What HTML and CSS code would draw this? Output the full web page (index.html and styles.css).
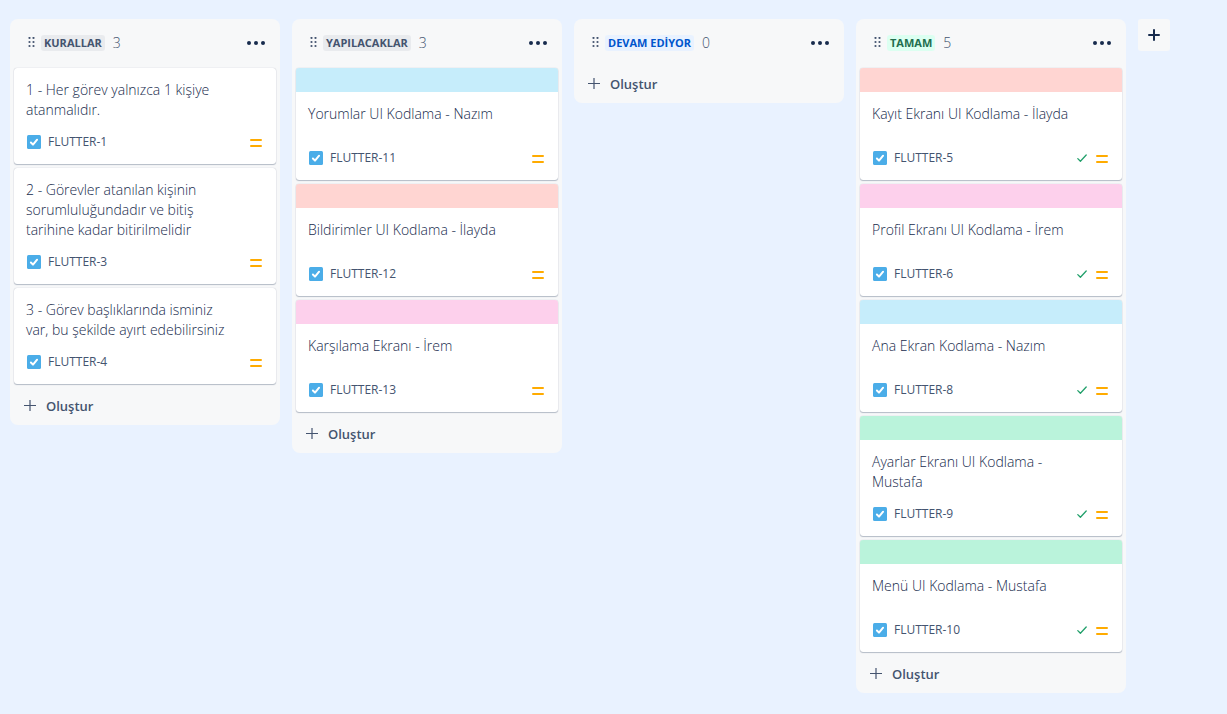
FILE: index.html
```html
<!DOCTYPE html>
<html lang="tr">
<head>
<meta charset="utf-8">
<meta name="viewport" content="width=device-width, initial-scale=1">
<title>Flutter Panosu</title>
<link rel="stylesheet" href="styles.css">
</head>
<body>
<svg class="sprite" aria-hidden="true">
  <symbol id="grip" viewBox="0 0 7 11"><g fill="currentColor"><circle cx="1.5" cy="1" r="1.1"/><circle cx="5.5" cy="1" r="1.1"/><circle cx="1.5" cy="5" r="1.1"/><circle cx="5.5" cy="5" r="1.1"/><circle cx="1.5" cy="9" r="1.1"/><circle cx="5.5" cy="9" r="1.1"/></g></symbol>
  <symbol id="more" viewBox="0 0 18 4"><g fill="currentColor"><circle cx="2" cy="2" r="2"/><circle cx="9" cy="2" r="2"/><circle cx="16" cy="2" r="2"/></g></symbol>
  <symbol id="task" viewBox="0 0 14 14"><rect width="14" height="14" rx="1.5" fill="#4bade8"/><path d="M3.9 7.5 6 9.6l4.1-4.9" fill="none" stroke="#fff" stroke-width="2" stroke-linecap="round" stroke-linejoin="round"/></symbol>
  <symbol id="priority" viewBox="0 0 12 10"><path d="M1 3h10M1 9h10" stroke="#ffab00" stroke-width="2" stroke-linecap="round"/></symbol>
  <symbol id="done" viewBox="0 0 11 10"><path d="M.8 5.6 3.4 8.2 9.2 2" fill="none" stroke="#22a06b" stroke-width="1.3" stroke-linecap="round" stroke-linejoin="round"/></symbol>
  <symbol id="plus" viewBox="0 0 12 12"><path d="M6 0v11M0 5.5h12" stroke="currentColor" stroke-width="1.2"/></symbol>
  <symbol id="plus-bold" viewBox="0 0 12 12"><path d="M6 1v10M1 6h10" stroke="currentColor" stroke-width="2" stroke-linecap="round"/></symbol>
</svg>
<main class="board">
  <section class="column">
    <header class="column-header">
      <svg class="grip"><use href="#grip"/></svg>
      <h2 class="status">KURALLAR</h2><span class="count">3</span>
      <button class="more" type="button" aria-label="Diğer"><svg><use href="#more"/></svg></button>
    </header>
    <div class="cards">
      <article class="card">
        <p class="title">1 - Her görev yalnızca 1 kişiye atanmalıdır.</p>
        <footer class="meta"><svg class="task"><use href="#task"/></svg><span class="key">FLUTTER-1</span><svg class="priority"><use href="#priority"/></svg></footer>
      </article>
      <article class="card">
        <p class="title">2 - Görevler atanılan kişinin sorumluluğundadır ve bitiş tarihine kadar bitirilmelidir</p>
        <footer class="meta"><svg class="task"><use href="#task"/></svg><span class="key">FLUTTER-3</span><svg class="priority"><use href="#priority"/></svg></footer>
      </article>
      <article class="card">
        <p class="title">3 - Görev başlıklarında isminiz var, bu şekilde ayırt edebilirsiniz</p>
        <footer class="meta"><svg class="task"><use href="#task"/></svg><span class="key">FLUTTER-4</span><svg class="priority"><use href="#priority"/></svg></footer>
      </article>
    </div>
    <button class="create" type="button"><svg><use href="#plus"/></svg>Oluştur</button>
  </section>

  <section class="column">
    <header class="column-header">
      <svg class="grip"><use href="#grip"/></svg>
      <h2 class="status">YAPILACAKLAR</h2><span class="count">3</span>
      <button class="more" type="button" aria-label="Diğer"><svg><use href="#more"/></svg></button>
    </header>
    <div class="cards">
      <article class="card cover blue">
        <p class="title">Yorumlar UI Kodlama - Nazım</p>
        <footer class="meta"><svg class="task"><use href="#task"/></svg><span class="key">FLUTTER-11</span><svg class="priority"><use href="#priority"/></svg></footer>
      </article>
      <article class="card cover red">
        <p class="title">Bildirimler UI Kodlama - İlayda</p>
        <footer class="meta"><svg class="task"><use href="#task"/></svg><span class="key">FLUTTER-12</span><svg class="priority"><use href="#priority"/></svg></footer>
      </article>
      <article class="card cover pink">
        <p class="title">Karşılama Ekranı - İrem</p>
        <footer class="meta"><svg class="task"><use href="#task"/></svg><span class="key">FLUTTER-13</span><svg class="priority"><use href="#priority"/></svg></footer>
      </article>
    </div>
    <button class="create" type="button"><svg><use href="#plus"/></svg>Oluştur</button>
  </section>

  <section class="column">
    <header class="column-header">
      <svg class="grip"><use href="#grip"/></svg>
      <h2 class="status progress">DEVAM EDİYOR</h2><span class="count">0</span>
      <button class="more" type="button" aria-label="Diğer"><svg><use href="#more"/></svg></button>
    </header>
    <button class="create" type="button"><svg><use href="#plus"/></svg>Oluştur</button>
  </section>

  <section class="column">
    <header class="column-header">
      <svg class="grip"><use href="#grip"/></svg>
      <h2 class="status complete">TAMAM</h2><span class="count">5</span>
      <button class="more" type="button" aria-label="Diğer"><svg><use href="#more"/></svg></button>
    </header>
    <div class="cards">
      <article class="card cover red">
        <p class="title">Kayıt Ekranı UI Kodlama - İlayda</p>
        <footer class="meta"><svg class="task"><use href="#task"/></svg><span class="key">FLUTTER-5</span><svg class="done"><use href="#done"/></svg><svg class="priority"><use href="#priority"/></svg></footer>
      </article>
      <article class="card cover pink">
        <p class="title">Profil Ekranı UI Kodlama - İrem</p>
        <footer class="meta"><svg class="task"><use href="#task"/></svg><span class="key">FLUTTER-6</span><svg class="done"><use href="#done"/></svg><svg class="priority"><use href="#priority"/></svg></footer>
      </article>
      <article class="card cover blue">
        <p class="title">Ana Ekran Kodlama - Nazım</p>
        <footer class="meta"><svg class="task"><use href="#task"/></svg><span class="key">FLUTTER-8</span><svg class="done"><use href="#done"/></svg><svg class="priority"><use href="#priority"/></svg></footer>
      </article>
      <article class="card cover green">
        <p class="title">Ayarlar Ekranı UI Kodlama - Mustafa</p>
        <footer class="meta"><svg class="task"><use href="#task"/></svg><span class="key">FLUTTER-9</span><svg class="done"><use href="#done"/></svg><svg class="priority"><use href="#priority"/></svg></footer>
      </article>
      <article class="card cover green">
        <p class="title">Menü UI Kodlama - Mustafa</p>
        <footer class="meta"><svg class="task"><use href="#task"/></svg><span class="key">FLUTTER-10</span><svg class="done"><use href="#done"/></svg><svg class="priority"><use href="#priority"/></svg></footer>
      </article>
    </div>
    <button class="create" type="button"><svg><use href="#plus"/></svg>Oluştur</button>
  </section>

  <button class="add-column" type="button" aria-label="Sütun oluştur"><svg><use href="#plus-bold"/></svg></button>
</main>
</body>
</html>
```
FILE: styles.css
```css
* { box-sizing: border-box; }

body {
  margin: 0;
  background: #e9f2ff;
  color: #172b4d;
  font: 14px/20px "Open Sans", "Noto Sans", sans-serif;
}

.sprite { display: none; }

button {
  border: 0;
  background: none;
  font: inherit;
  cursor: pointer;
}

.board {
  display: flex;
  align-items: flex-start;
  gap: 12px;
  padding: 19px 10px;
}

.column {
  flex: none;
  width: 270px;
  padding: 0 4px 1px;
  border-radius: 8px;
  background: #f7f8f9;
}

.column-header {
  display: flex;
  align-items: center;
  height: 47px;
  padding: 0 4px 0 14px;
}

.grip {
  width: 7px;
  height: 11px;
  margin-right: 6px;
  color: #44546f;
}

.status {
  margin: 0;
  padding: 0 3px;
  border-radius: 3px;
  background: #e9ebee;
  color: #44546f;
  font-size: 11px;
  font-weight: 700;
  line-height: 16px;
}

.status.progress { background: #e9f2ff; color: #0055cc; }
.status.complete { background: #dcfff1; color: #216e4e; }

.count {
  margin-left: 8px;
  color: #44546f;
  font-weight: 300;
}

.more {
  display: grid;
  place-items: center;
  width: 32px;
  height: 32px;
  margin-left: auto;
  padding: 0;
  color: #172b4d;
}

.more svg { width: 18px; height: 4px; }

.cards {
  display: flex;
  flex-direction: column;
  gap: 4px;
  padding: 2px 0 4px;
}

.card {
  padding: 12px;
  overflow: hidden;
  border-radius: 3px;
  background: #fff;
  box-shadow: 0 1px 1px #091e4240, 0 0 1px #091e424f;
}

.cover::before {
  content: "";
  display: block;
  height: 24px;
  margin: -12px -12px 12px;
}

.blue::before { background: #c6edfb; }
.red::before { background: #ffd5d2; }
.pink::before { background: #fdd0ec; }
.green::before { background: #baf3db; }

.title {
  min-height: 32px;
  margin: 0 32px 12px 0;
  font-weight: 300;
}

.meta {
  display: flex;
  align-items: center;
  gap: 8px;
  height: 20px;
  padding: 0 2px 0 1px;
}

.task { width: 14px; height: 14px; }

.key {
  flex: 1;
  margin-left: -1px;
  color: #44546f;
  font-size: 12px;
  font-weight: 500;
}

.priority { width: 12px; height: 10px; }
.done { width: 11px; height: 10px; }

.create {
  display: flex;
  align-items: center;
  gap: 10px;
  width: 100%;
  height: 36px;
  padding: 0 10px;
  color: #44546f;
  font-size: 13px;
  font-weight: 600;
}

.create svg { width: 12px; height: 12px; }

.add-column {
  display: grid;
  flex: none;
  place-items: center;
  width: 32px;
  height: 32px;
  padding: 0;
  border-radius: 3px;
  background: #f7f8f9;
  color: #172b4d;
}

.add-column svg { width: 12px; height: 12px; }
```
